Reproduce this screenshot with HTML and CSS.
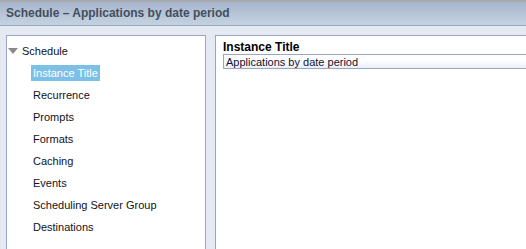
FILE: index.html
```html
<!DOCTYPE html>
<html lang="en">
<head>
    <meta charset="UTF-8">
    <link rel="stylesheet" href="styles.css">
    <title>Schedule</title>
</head>
<body>
    <header class="title-bar">
        <h1>Schedule &ndash; Applications by date period</h1>
    </header>
    <div class="content">
        <div class="tree-panel">
            <div class="tree-root">
                <span class="arrow"></span>
                <span>Schedule</span>
            </div>
            <ul class="tree-items">
                <li><span class="selected">Instance Title</span></li>
                <li><span>Recurrence</span></li>
                <li><span>Prompts</span></li>
                <li><span>Formats</span></li>
                <li><span>Caching</span></li>
                <li><span>Events</span></li>
                <li><span>Scheduling Server Group</span></li>
                <li><span>Destinations</span></li>
            </ul>
        </div>
        <div class="detail-panel">
            <label class="field-label" for="instance-title">Instance Title</label>
            <input class="field-input" id="instance-title" type="text" value="Applications by date period">
        </div>
    </div>
</body>
</html>
```

FILE: styles.css
```css
/* Global */
body {
    margin: 0;
    padding: 0;
    background-color: #e4e9f2;
    font-family: 'Liberation Sans', Tahoma, sans-serif;
    font-size: 11px;
    color: #111122;
    overflow: hidden;
    height: 249px;
}

/* Title bar */
.title-bar {
    border-top: 2px solid #a9abae;
    height: 23px;
    background: linear-gradient(to bottom, #a5b5cb, #c6d2e1);
    border-bottom: 1px solid #96a7c2;
    box-sizing: content-box;
}

.title-bar h1 {
    margin: 0;
    padding: 4px 0 0 6px;
    font-size: 12px;
    font-weight: bold;
    color: #434f5e;
    line-height: 15px;
}

/* Main area */
.content {
    display: flex;
    gap: 9px;
    padding: 9px 0 0 6px;
    height: 214px;
}

.tree-panel {
    width: 198px;
    background: #ffffff;
    border: 1px solid #98a8c4;
    border-bottom: none;
    padding-top: 7px;
}

.tree-root {
    display: flex;
    align-items: center;
    height: 16px;
    padding-left: 1px;
}

.arrow {
    width: 0;
    height: 0;
    border-left: 5px solid transparent;
    border-right: 5px solid transparent;
    border-top: 6px solid #8a8a8a;
    margin-right: 4px;
}

.tree-items {
    list-style: none;
    margin: 0;
    padding: 6px 0 0 24px;
}

.tree-items li {
    height: 22px;
}

.tree-items span {
    display: inline-block;
    padding: 0 2px;
    line-height: 16px;
}

.tree-items .selected {
    background: #7cc0e8;
    color: #ffffff;
}

.detail-panel {
    flex: 1;
    background: #ffffff;
    border: 1px solid #98a8c4;
    border-right: none;
    border-bottom: none;
    padding: 4px 0 0 7px;
    display: flex;
    flex-direction: column;
}

.field-label {
    font-weight: bold;
    font-size: 12px;
    line-height: 14px;
    color: #000000;
}

.field-input {
    margin: 0;
    height: 13px;
    padding: 0 2px;
    border: 1px solid #98a8c4;
    border-right: none;
    font-family: 'Liberation Sans', Tahoma, sans-serif;
    font-size: 11px;
    color: #111133;
    background: linear-gradient(to bottom, #ffffff 40%, #eaeff6);
    outline: none;
}
```
